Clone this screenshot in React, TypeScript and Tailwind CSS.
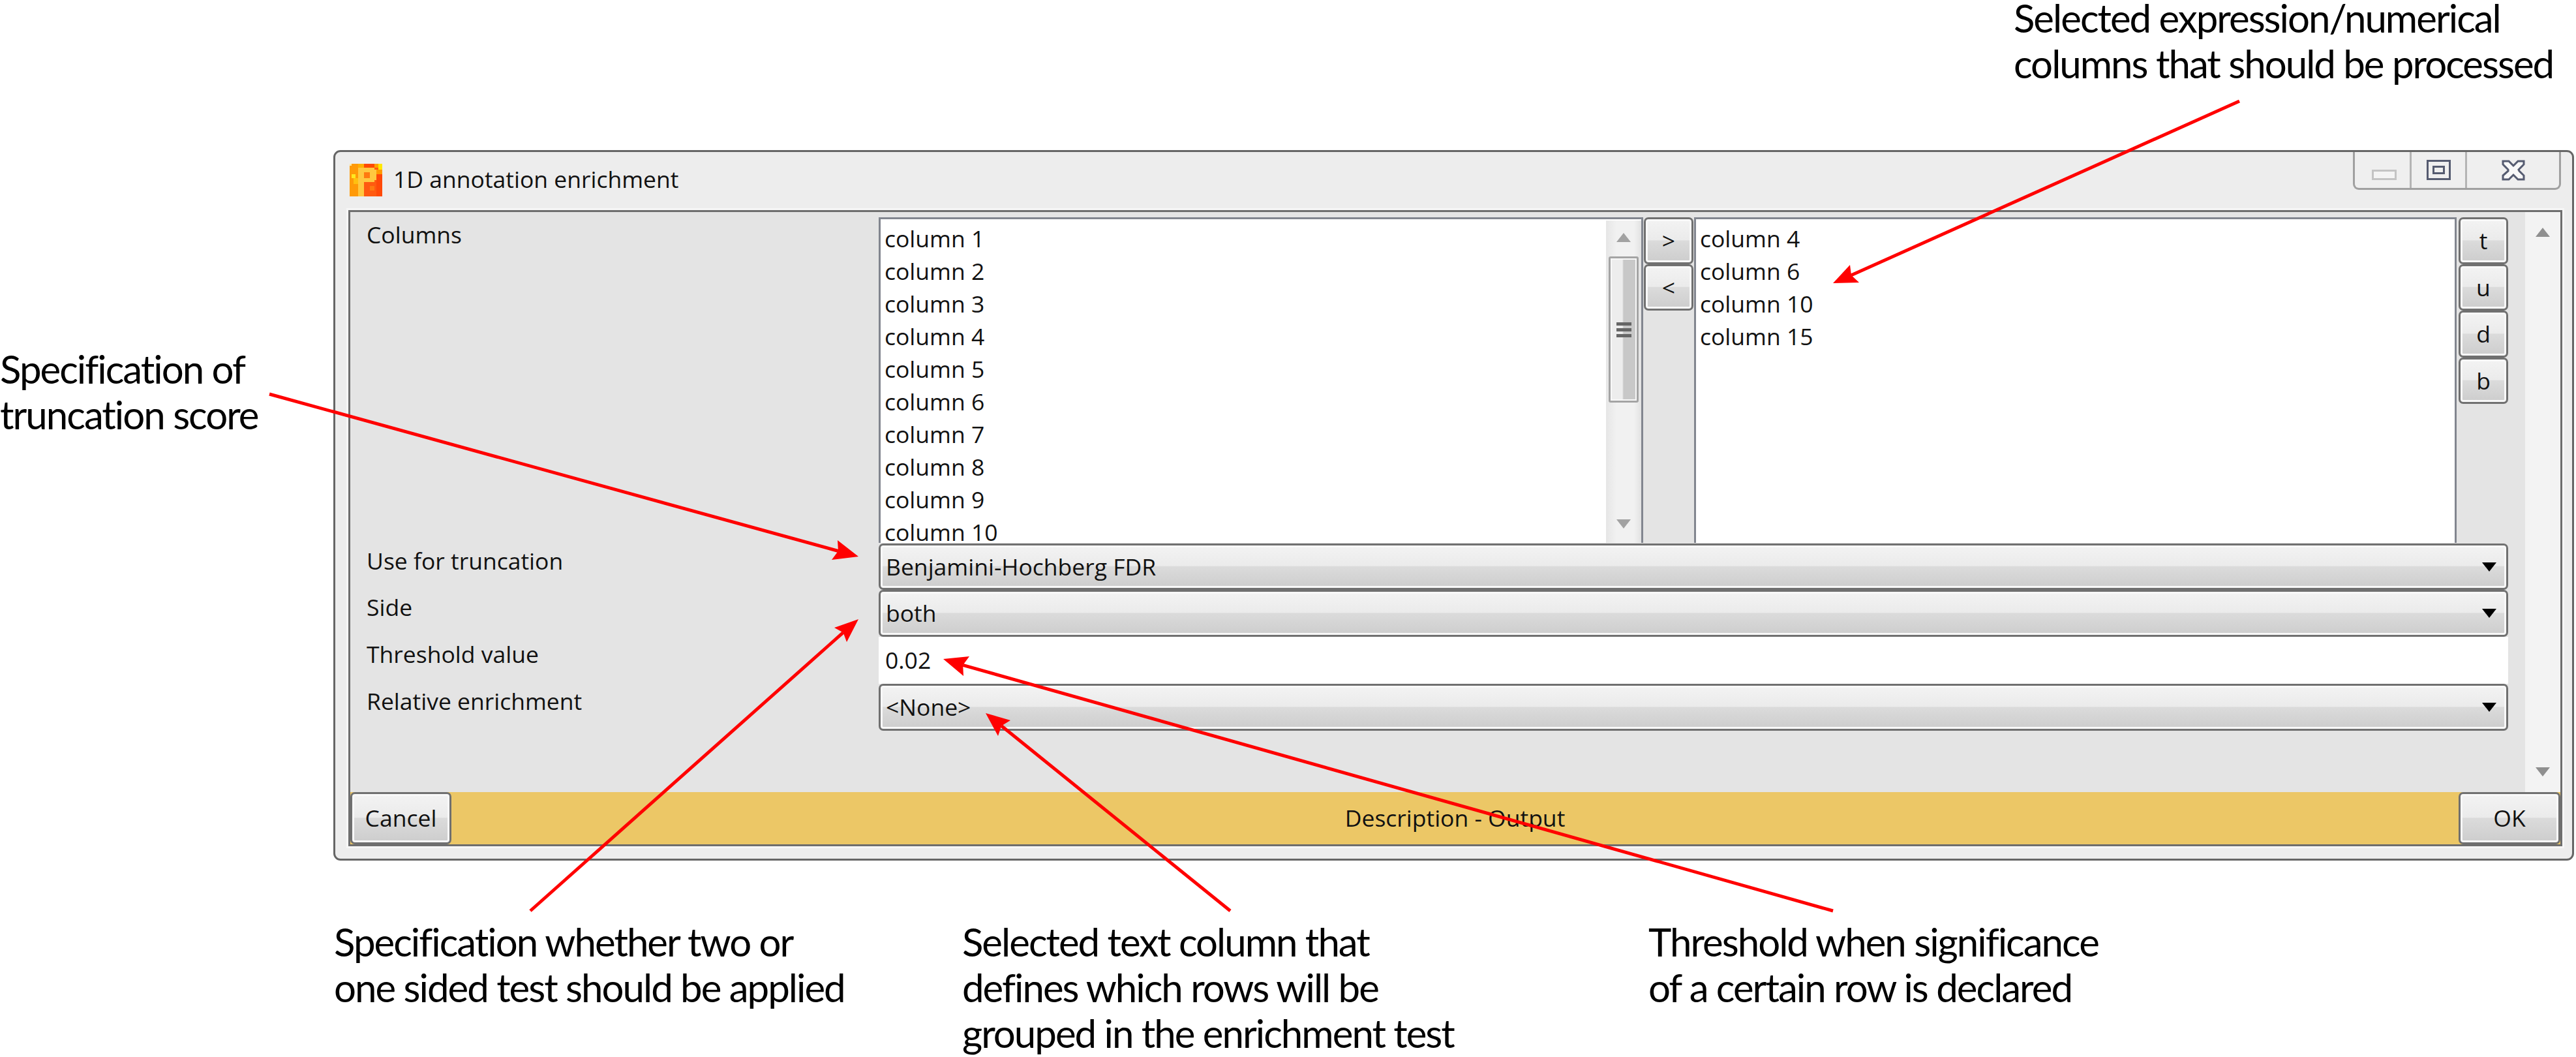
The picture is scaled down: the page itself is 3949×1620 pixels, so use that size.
import React from "react";

const uiFont = "[font-family:'Open_Sans',sans-serif] text-[35.5px] text-[#111]";
const noteFont = "[font-family:Lato,sans-serif] text-[60px] tracking-[-2px] leading-[70px] text-black whitespace-pre";
const btnBg =
  "bg-[linear-gradient(180deg,#f3f3f3_0%,#ebebeb_48%,#dbdbdb_50%,#cdcdcd_100%)] border-[3px] border-[#707070] rounded-[7px] shadow-[inset_0_0_0_3px_#f8f8f8]";

type ArrowDef = { tail: number[]; tip: number[]; a: number[]; b: number[] };

const arrows: ArrowDef[] = [
  { tail: [3433, 155], tip: [2810, 434], a: [2836, 406], b: [2850, 433] },
  { tail: [413, 604], tip: [1316, 853], a: [1284, 828], b: [1275, 858] },
  { tail: [813, 1396], tip: [1316, 949], a: [1279, 962], b: [1298, 984] },
  { tail: [1886, 1396], tip: [1511, 1093], a: [1549, 1104], b: [1530, 1128] },
  { tail: [2810, 1396], tip: [1446, 1010], a: [1486, 1006], b: [1477, 1036] },
];

const Arrows = () => (
  <svg className="absolute inset-0 pointer-events-none" width="3949" height="1620" viewBox="0 0 3949 1620">
    {arrows.map((ar, i) => {
      const mx = (ar.a[0] + ar.b[0]) / 2;
      const my = (ar.a[1] + ar.b[1]) / 2;
      const nx = ar.tip[0] + (mx - ar.tip[0]) * 0.85;
      const ny = ar.tip[1] + (my - ar.tip[1]) * 0.85;
      return (
        <g key={i}>
          <line x1={ar.tail[0]} y1={ar.tail[1]} x2={nx} y2={ny} stroke="#ff0000" strokeWidth="5" />
          <polygon
            points={`${ar.tip[0]},${ar.tip[1]} ${ar.a[0]},${ar.a[1]} ${nx},${ny} ${ar.b[0]},${ar.b[1]}`}
            fill="#ff0000"
          />
        </g>
      );
    })}
  </svg>
);

const AppIcon = () => (
  <svg width="50" height="50" viewBox="0 0 16 16" shapeRendering="crispEdges" className="shrink-0">
    <rect width="16" height="16" fill="#ff5a10" />
    <rect width="4" height="16" fill="#ff9a08" />
    <rect x="0" y="0" width="1" height="1" fill="#ffe8a0" />
    <rect x="1" y="5" width="2" height="2" fill="#ffe820" />
    <rect x="2" y="7" width="2" height="3" fill="#ffc010" />
    <rect x="4" width="3" height="2" fill="#ffb000" />
    <rect x="7" width="5" height="2" fill="#ff4a00" />
    <rect x="12" width="2" height="2" fill="#ffa000" />
    <rect x="14" width="2" height="3" fill="#ffe800" />
    <rect x="13" y="3" width="3" height="2" fill="#ff9a00" />
    <rect x="13" y="5" width="3" height="11" fill="#ff4a08" />
    <rect x="10" y="11" width="2" height="2" fill="#ff7a10" />
    <path d="M4 2H12V3H13V8H12V9H7V16H4Z" fill="#ffc840" />
    <rect x="7" y="4" width="3" height="3" fill="#ff7a10" />
  </svg>
);

const WindowButtons = () => (
  <div className="flex w-[319px] mr-[2px] h-[58px] border-x-[3px] border-b-[3px] border-[#a0a0a0] rounded-b-[9px] bg-[#efefef]">
    <div className="w-[84px] flex justify-center pt-[27px] pl-[5px]">
      <div className="w-[38px] h-[16px] border-[3px] border-[#c4c4c4] bg-[#f4f4f4]" />
    </div>
    <div className="w-[85px] border-l-[3px] border-[#b4b4b4] flex justify-center pt-[12px]">
      <div className="w-[37px] h-[31px] border-[3px] border-[#555b70] flex items-center justify-center">
        <div className="w-[19px] h-[13px] border-[3px] border-[#555b70]" />
      </div>
    </div>
    <div className="flex-1 border-l-[3px] border-[#b4b4b4] flex justify-center pt-[12px]">
      <svg width="36" height="32" viewBox="0 0 36 32">
        <path
          d="M2 2h9l7 7 7-7h9v5l-8 8 1 2 7 7v6h-9l-7-7-7 7H2v-6l8-7v-2L2 7z"
          fill="#f8f8f8"
          stroke="#555b70"
          strokeWidth="3"
        />
      </svg>
    </div>
  </div>
);

const UpArrow = ({ color }: { color: string }) => (
  <svg width="22" height="14" viewBox="0 0 22 14">
    <polygon points="11,0 22,14 0,14" fill={color} />
  </svg>
);

const DownArrow = ({ color }: { color: string }) => (
  <svg width="22" height="14" viewBox="0 0 22 14">
    <polygon points="0,0 22,0 11,14" fill={color} />
  </svg>
);

const ListScroll = () => (
  <div className="w-[54px] h-full my-[2px] bg-[linear-gradient(90deg,#e6e6e6,#f1f1f1_30%,#f1f1f1_80%,#e2e2e2)] flex flex-col items-center pt-[19px]">
    <UpArrow color="#a2a2a2" />
    <div className="mt-[22px] w-[46px] h-[224px] border-[3px] border-[#a4a4a4] rounded-[3px] bg-[linear-gradient(90deg,#ededed_0%,#ededed_45%,#c8c8c8_50%,#c8c8c8_100%)] shadow-[inset_0_0_0_2px_#f8f8f8] flex flex-col items-center justify-center gap-[4px]">
      <div className="w-[23px] h-[5px] bg-[#666]" />
      <div className="w-[23px] h-[5px] bg-[#666]" />
      <div className="w-[23px] h-[5px] bg-[#666]" />
    </div>
    <div className="mt-auto mb-[24px]">
      <DownArrow color="#a2a2a2" />
    </div>
  </div>
);

const ListItems = ({ items }: { items: string[] }) => (
  <div className="flex-1 min-w-0 h-full overflow-hidden pl-[6px] pt-[4px]">
    {items.map((t) => (
      <div key={t} className={`${uiFont} leading-[50px] h-[50px] whitespace-nowrap`}>
        {t}
      </div>
    ))}
  </div>
);

const SmallButton = ({ label }: { label: string }) => (
  <div className={`${btnBg} ${uiFont} w-[76px] h-[71.5px] shrink-0 flex items-center justify-center leading-none`}>
    {label}
  </div>
);

const Combo = ({ value, height }: { value: string; height: string }) => (
  <div className={`${btnBg} ${uiFont} ${height} w-full flex items-center justify-between pl-[8px] pr-[15px]`}>
    <span>{value}</span>
    <DownArrow color="#000" />
  </div>
);

const Label = ({ text, height }: { text: string; height: string }) => (
  <div className={`${uiFont} ${height} w-[810px] shrink-0 pl-[25px] pt-[3px] leading-[46px]`}>{text}</div>
);

const allColumns = Array.from({ length: 10 }, (_, i) => `column ${i + 1}`);

const Dialog = () => (
  <div className="ml-[511px] mt-[230px] w-[3435px] h-[1089px] border-[3px] border-[#666] rounded-[11px] bg-[#ededed] flex flex-col pl-[20px] pr-[15px]">
    {/* title bar */}
    <div className="h-[89px] shrink-0 flex items-start justify-between">
      <div className="flex items-center gap-[17px] pt-[18px] pl-[2px]">
        <AppIcon />
        <span className={`${uiFont} text-[#000] leading-[50px] -mt-[4px]`}>1D annotation enrichment</span>
      </div>
      <WindowButtons />
    </div>
    {/* body */}
    <div className="h-[975px] border-[3px] border-[#6e6e6e] outline-[3px] outline-[#f6f6f6] flex flex-col bg-[#e4e4e4]">
      <div className="flex-1 min-h-0 flex">
        <div className="flex-1 min-w-0 pt-[8px] flex flex-col">
          <div className="flex h-[500px]">
            <Label text="Columns" height="h-[500px]" />
            <div className="flex-1 min-w-0 flex h-[499px]">
              <div className="w-[1172px] h-full border-[3px] border-b-0 border-[#82868f] bg-white flex overflow-hidden">
                <ListItems items={allColumns} />
                <ListScroll />
              </div>
              <div className="w-[78px] flex flex-col items-center">
                <SmallButton label=">" />
                <SmallButton label="<" />
              </div>
              <div className="flex-1 min-w-0 h-full border-[3px] border-b-0 border-[#82868f] bg-white">
                <ListItems items={["column 4", "column 6", "column 10", "column 15"]} />
              </div>
              <div className="w-[79px] flex flex-col items-end">
                <SmallButton label="t" />
                <SmallButton label="u" />
                <SmallButton label="d" />
                <SmallButton label="b" />
              </div>
            </div>
          </div>
          <div className="flex h-[71px]">
            <Label text="Use for truncation" height="h-[71px]" />
            <div className="flex-1 min-w-0">
              <Combo value="Benjamini-Hochberg FDR" height="h-[71px]" />
            </div>
          </div>
          <div className="flex h-[72px]">
            <Label text="Side" height="h-[72px]" />
            <div className="flex-1 min-w-0">
              <Combo value="both" height="h-[72px]" />
            </div>
          </div>
          <div className="flex h-[72px]">
            <Label text="Threshold value" height="h-[72px]" />
            <div className={`${uiFont} flex-1 min-w-0 bg-white flex items-center pl-[10px] h-[72px]`}>0.02</div>
          </div>
          <div className="flex h-[72px]">
            <Label text="Relative enrichment" height="h-[72px]" />
            <div className="flex-1 min-w-0">
              <Combo value="<None>" height="h-[72px]" />
            </div>
          </div>
        </div>
        <div className="w-[26px] shrink-0" />
        <div className="w-[54px] shrink-0 bg-[#f3f3f3] flex flex-col items-center pt-[24px] pb-[24px] justify-between">
          <UpArrow color="#8f8f8f" />
          <DownArrow color="#8f8f8f" />
        </div>
      </div>
      {/* footer */}
      <div className="h-[80px] shrink-0 bg-[#ecc766] flex items-stretch">
        <div className={`${btnBg} ${uiFont} w-[155px] flex items-center justify-center`}>Cancel</div>
        <div className={`${uiFont} flex-1 flex items-center justify-center`}>Description - Output</div>
        <div className={`${btnBg} ${uiFont} w-[156px] flex items-center justify-center`}>OK</div>
      </div>
    </div>
  </div>
);

export default function App() {
  return (
    <div className="relative w-[3949px] h-[1620px] bg-white overflow-hidden">
      <Dialog />
      <div className={`absolute left-[3087px] top-[-8px] ${noteFont}`}>
        {"Selected expression/numerical\ncolumns that should be processed"}
      </div>
      <div className={`absolute left-[0px] top-[530px] ${noteFont}`}>{"Specification of\ntruncation score"}</div>
      <div className={`absolute left-[512px] top-[1408px] ${noteFont}`}>
        {"Specification whether two or\none sided test should be applied"}
      </div>
      <div className={`absolute left-[1475px] top-[1408px] ${noteFont}`}>
        {"Selected text column that\ndefines which rows will be\ngrouped in the enrichment test"}
      </div>
      <div className={`absolute left-[2527px] top-[1408px] ${noteFont}`}>
        {"Threshold when significance\nof a certain row is declared"}
      </div>
      <Arrows />
    </div>
  );
}
